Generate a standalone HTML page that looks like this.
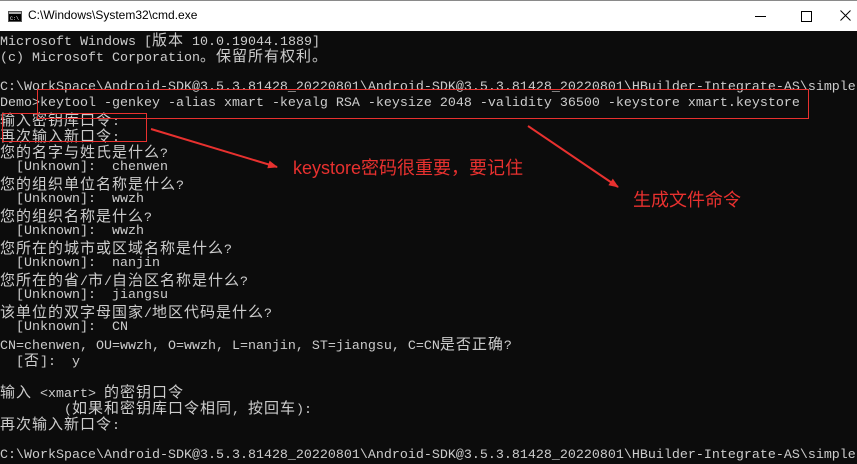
<!DOCTYPE html>
<html><head><meta charset="utf-8"><style>
body{margin:0;width:857px;height:453px;overflow:hidden;background:#0c0c0c;position:relative;font-family:"Liberation Mono",monospace}
.tb{position:absolute;left:0;top:0;width:857px;height:31px;background:#fff;border-top:1px solid #8a8a8a;box-sizing:border-box}
.tt{position:absolute;left:28px;top:7px;font:12px "Liberation Sans",sans-serif;color:#000}
.term{position:absolute;left:0;top:32px;color:#cccccc;font-size:13.33px;line-height:16px}
.term div{height:16px;white-space:pre}
.c{font-family:"Noto Sans CJK SC",sans-serif;font-size:15px;letter-spacing:1px;line-height:16px}
.r{position:absolute;border:1.5px solid #e8312f}
.a{position:absolute;color:#e8312f;font-family:"Liberation Sans","Noto Sans CJK SC",sans-serif;font-size:18px;white-space:nowrap}
</style></head><body>
<div class="tb">
<svg style="position:absolute;left:8px;top:10px" width="14" height="11"><rect x="0.5" y="0.5" width="13" height="10" fill="#000" stroke="#555"/><rect x="1" y="1" width="12" height="2" fill="#aaa"/><text x="2" y="9" font-size="5" fill="#fff" font-family="Liberation Mono">C:\</text></svg>
<div class="tt">C:\Windows\System32\cmd.exe</div>
<div style="position:absolute;left:755px;top:15px;width:11px;height:1px;background:#000"></div>
<div style="position:absolute;left:801px;top:10px;width:9px;height:9px;border:1px solid #000"></div>
<svg style="position:absolute;left:840px;top:9px" width="11" height="11"><path d="M0.5 0.5L10.5 10.5M10.5 0.5L0.5 10.5" stroke="#000" stroke-width="1"/></svg>
</div>
<div class="term"><div>Microsoft Windows [<span class="c">版本</span> 10.0.19044.1889]</div><div>(c) Microsoft Corporation<span class="c">。保留所有权利。</span></div><div> </div><div>C:\WorkSpace\Android-SDK@3.5.3.81428_20220801\Android-SDK@3.5.3.81428_20220801\HBuilder-Integrate-AS\simple</div><div>Demo&gt;keytool -genkey -alias xmart -keyalg RSA -keysize 2048 -validity 36500 -keystore xmart.keystore</div><div><span class="c">输入密钥库口令</span>:</div><div><span class="c">再次输入新口令</span>:</div><div><span class="c">您的名字与姓氏是什么</span>?</div><div>  [Unknown]:  chenwen</div><div><span class="c">您的组织单位名称是什么</span>?</div><div>  [Unknown]:  wwzh</div><div><span class="c">您的组织名称是什么</span>?</div><div>  [Unknown]:  wwzh</div><div><span class="c">您所在的城市或区域名称是什么</span>?</div><div>  [Unknown]:  nanjin</div><div><span class="c">您所在的省</span>/<span class="c">市</span>/<span class="c">自治区名称是什么</span>?</div><div>  [Unknown]:  jiangsu</div><div><span class="c">该单位的双字母国家</span>/<span class="c">地区代码是什么</span>?</div><div>  [Unknown]:  CN</div><div>CN=chenwen, OU=wwzh, O=wwzh, L=nanjin, ST=jiangsu, C=CN<span class="c">是否正确</span>?</div><div>  [<span class="c">否</span>]:  y</div><div> </div><div><span class="c">输入</span> &lt;xmart&gt; <span class="c">的密钥口令</span></div><div>        (<span class="c">如果和密钥库口令相同</span>, <span class="c">按回车</span>):</div><div><span class="c">再次输入新口令</span>:</div><div> </div><div>C:\WorkSpace\Android-SDK@3.5.3.81428_20220801\Android-SDK@3.5.3.81428_20220801\HBuilder-Integrate-AS\simple</div></div>
<div class="r" style="left:37px;top:89px;width:770px;height:28px"></div>
<div class="r" style="left:2px;top:113px;width:143px;height:27px"></div>
<svg style="position:absolute;left:0;top:0" width="857" height="453">
<defs><marker id="m" markerWidth="10" markerHeight="8" refX="9" refY="4" orient="auto" markerUnits="userSpaceOnUse"><path d="M0 0L10 4L0 8z" fill="#e8312f"/></marker></defs>
<line x1="151" y1="129" x2="277" y2="167" stroke="#e8312f" stroke-width="2" marker-end="url(#m)"/>
<line x1="528" y1="126" x2="618" y2="187" stroke="#e8312f" stroke-width="2" marker-end="url(#m)"/>
</svg>
<div class="a" style="left:293px;top:154px">keystore密码很重要，要记住</div>
<div class="a" style="left:633px;top:186px">生成文件命令</div>
</body></html>
